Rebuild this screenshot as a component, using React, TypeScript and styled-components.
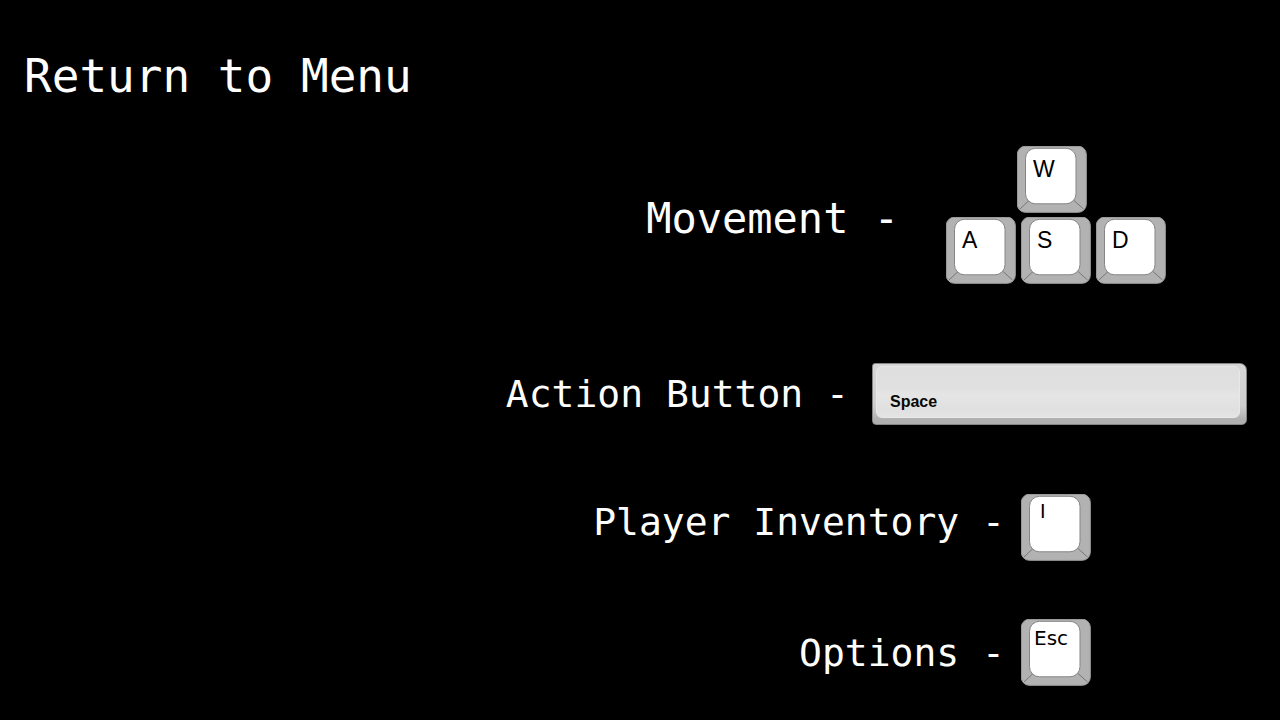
import React from "react";
import styled, { createGlobalStyle } from "styled-components";

const GlobalStyle = createGlobalStyle`
  *, *::before, *::after { box-sizing: border-box; }
  body {
    margin: 0;
    background: #000;
    color: #fff;
    font-family: "DejaVu Sans Mono", monospace;
  }
`;

const Screen = styled.main`
  min-height: 100vh;
  padding: 48px 0 34px;
  background: #000;
`;

const MenuButton = styled.button`
  display: block;
  margin: 0 0 0 24px;
  padding: 0;
  border: 0;
  background: none;
  color: inherit;
  font: 46px/56px "DejaVu Sans Mono", monospace;
  cursor: pointer;
`;

const Bindings = styled.ul`
  margin: 0;
  padding: 0;
  list-style: none;
`;

const Binding = styled.li<{ $top: number; $right: number; $align?: string }>`
  display: flex;
  justify-content: flex-end;
  align-items: ${({ $align = "center" }) => $align};
  margin-top: ${({ $top }) => $top}px;
  padding-right: ${({ $right }) => $right}px;
`;

const Label = styled.span<{ $large?: boolean; $gap: number }>`
  margin-right: ${({ $gap }) => $gap}px;
  padding-top: ${({ $large }) => ($large ? 8 : 0)}px;
  font-size: ${({ $large }) => ($large ? 42 : 38)}px;
  line-height: 56px;
  white-space: pre;
`;

const Cluster = styled.div`
  display: flex;
  flex-direction: column;
  gap: 4px;
`;

const ClusterRow = styled.div<{ $shift?: number }>`
  display: flex;
  justify-content: center;
  gap: 5px;
  padding-right: ${({ $shift = 0 }) => $shift}px;
`;

const Cap = styled.kbd`
  display: grid;
  width: 70px;
  height: 67px;
  color: #000;

  > * { grid-area: 1 / 1; }
`;

const Legend = styled.span<{ $kind: "letter" | "bar" | "word" }>`
  padding: ${({ $kind }) =>
    $kind === "letter" ? "11px 0 0 16px" : $kind === "bar" ? "5px 0 0 19px" : "7px 0 0 13px"};
  font-family: ${({ $kind }) =>
    $kind === "word" ? '"DejaVu Sans", sans-serif' : '"Liberation Sans", sans-serif'};
  font-size: ${({ $kind }) => ($kind === "letter" ? 23 : 20)}px;
  line-height: 24px;
`;

const SpaceBar = styled.kbd`
  display: flex;
  width: 375px;
  height: 62px;
  padding: 2px 6px 6px 3px;
  border: 1px solid #858585;
  border-radius: 3px 7px 5px 4px;
  background: linear-gradient(#d6d6d6, #cecece 70%, #b0b0b0 92%);
`;

const SpaceFace = styled.span`
  flex: 1;
  padding: 23px 0 0 13px;
  border: 1px solid #e8e8e8;
  border-radius: 6px;
  background: linear-gradient(#dfdfdf, #e0e0e0 42%, #e5e5e5 56%, #e0e0e0 85%, #e4e4e4);
  color: #080808;
  font: bold 16px/24px "Liberation Sans", sans-serif;
`;

type KeyProps = { legend: string; kind?: "letter" | "bar" | "word" };

function Key({ legend, kind = "letter" }: KeyProps) {
  return (
    <Cap>
      <svg width="70" height="67" viewBox="0 0 70 67" aria-hidden="true">
        <rect x="0.3" y="0.3" width="69" height="66" rx="8" fill="#b2b2b2" stroke="#a0a0a0" />
        <path d="M3 63 L12 54.5 M57 54.5 L66.5 63" stroke="#777" strokeWidth="1" fill="none" />
        <rect x="8.5" y="2.3" width="50.5" height="55.5" rx="10" fill="#fff" stroke="#858585" />
      </svg>
      <Legend $kind={kind}>{legend}</Legend>
    </Cap>
  );
}

export default function App() {
  return (
    <>
      <GlobalStyle />
      <Screen>
        <MenuButton type="button">Return to Menu</MenuButton>
        <Bindings>
          <Binding $top={42} $right={114}>
            <Label $large $gap={47}>Movement -</Label>
            <Cluster>
              <ClusterRow $shift={8}>
                <Key legend="W" />
              </ClusterRow>
              <ClusterRow>
                <Key legend="A" />
                <Key legend="S" />
                <Key legend="D" />
              </ClusterRow>
            </Cluster>
          </Binding>
          <Binding $top={79} $right={33}>
            <Label $gap={23}>Action Button -</Label>
            <SpaceBar>
              <SpaceFace>Space</SpaceFace>
            </SpaceBar>
          </Binding>
          <Binding $top={69} $right={189} $align="flex-start">
            <Label $gap={16}>Player Inventory -</Label>
            <Key legend="I" kind="bar" />
          </Binding>
          <Binding $top={58} $right={189}>
            <Label $gap={16}>Options -</Label>
            <Key legend="Esc" kind="word" />
          </Binding>
        </Bindings>
      </Screen>
    </>
  );
}
